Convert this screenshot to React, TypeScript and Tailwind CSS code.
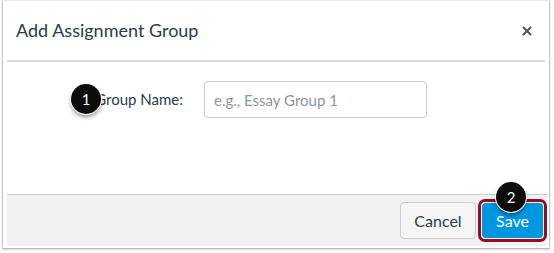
import { X } from "lucide-react";

function Badge({ n }: { n: number }) {
  return (
    <span className="flex h-[30px] w-[30px] items-center justify-center rounded-full bg-[#0c0c0c] text-[15px] text-white shadow-[0_3px_4px_rgba(0,0,0,0.45)] ring-1 ring-white">
      {n}
    </span>
  );
}

export default function App() {
  return (
    <div
      className="h-[253px] w-[554px] bg-white pl-[2px]"
      style={{ fontFamily: "Lato, 'Noto Sans', sans-serif" }}
    >
      <div className="flex h-[249px] w-[548px] flex-col border border-t-[#e8e8e8] border-x-[#c6c6c6] border-b-[#b9b9b9] pl-[4px] pr-[4px] pb-[2px] shadow-[0_1px_2px_rgba(0,0,0,0.15)]">
        {/* header */}
        <div className="flex h-[61px] shrink-0 items-center justify-between border-b-2 border-[#dadada] pl-[9px] pr-[11px]">
          <h2 className="text-[18px] text-[#2d3b45]">Add Assignment Group</h2>
          <X className="h-[14px] w-[14px] text-[#555]" strokeWidth={3.4} />
        </div>

        {/* body */}
        <div className="flex flex-1 items-start pt-[19px]">
          <div className="relative flex h-[37px] w-[176px] items-center justify-end">
            <div className="absolute left-[64px] top-[3px]">
              <Badge n={1} />
            </div>
            <span className="text-[15px] text-[#2d3b45]">Group Name:</span>
          </div>
          <input
            placeholder="e.g., Essay Group 1"
            className="ml-[21px] h-[37px] w-[223px] rounded-[4px] border border-[#c7cdd1] px-[9px] text-[15px] text-[#2d3b45] outline-none placeholder:text-[#8b969e]"
          />
        </div>

        {/* footer */}
        <div className="relative mr-[-2px] flex h-[52px] shrink-0 items-center justify-end gap-[2px] border-t border-[#c7cdd1] bg-[#f1f1f1]">
          <button className="h-[37px] w-[76px] rounded-[4px] border border-[#c7cdd1] bg-[#f5f5f5] text-[16px] text-[#2d3b45]">
            Cancel
          </button>
          <div className="rounded-[7px] border-[3px] border-[#8e0f1f] p-[1px]">
            <button className="h-[35px] w-[61px] rounded-[4px] bg-[#0096e0] text-[16px] text-white">
              Save
            </button>
          </div>
          <div className="absolute left-[489px] top-[-13px]">
            <Badge n={2} />
          </div>
        </div>
      </div>
    </div>
  );
}
